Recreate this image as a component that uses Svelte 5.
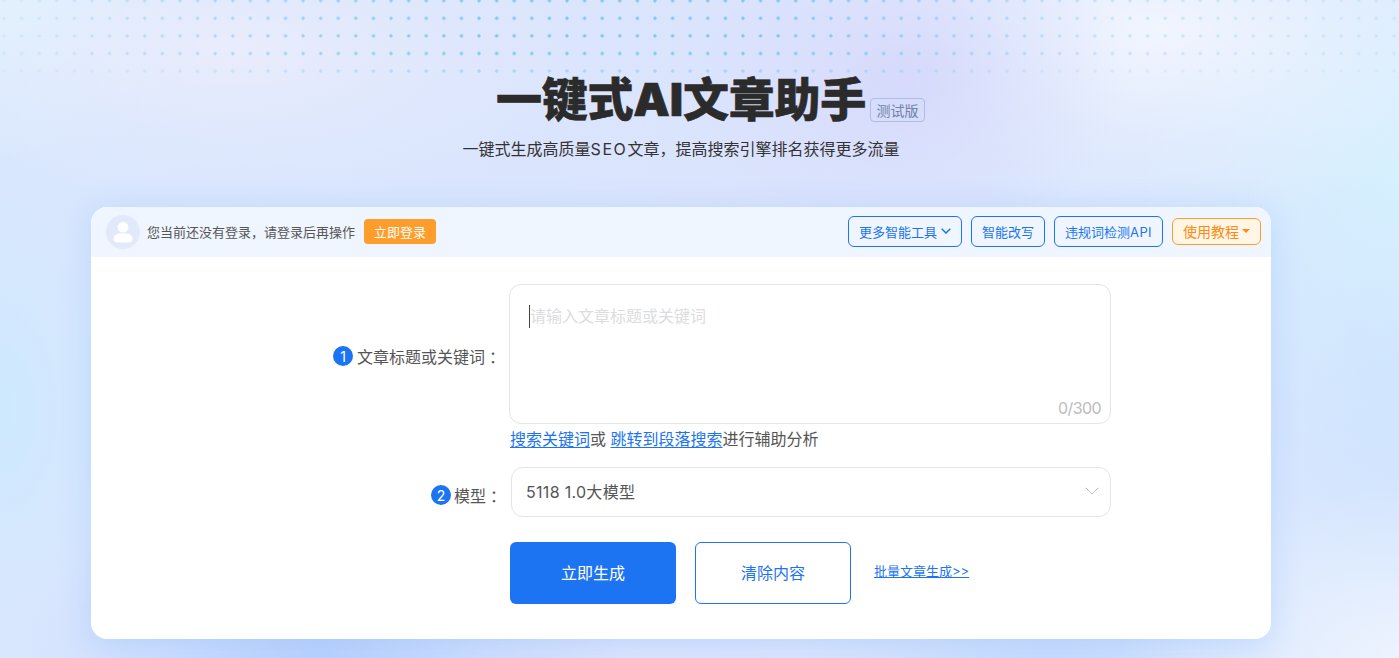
<script lang="ts">
  let title = $state('');
  let model = $state('5118 1.0大模型');
  const maxLength = 300;
</script>

<div class="page">
  <div class="dots"></div>

  <div class="main">
    <header class="hero">
      <h1>一键式AI文章助手<span class="beta">测试版</span></h1>
      <p>一键式生成高质量<span class="latin">SEO</span>文章，提高搜索引擎排名获得更多流量</p>
    </header>

    <section class="card">
      <div class="topbar">
        <div class="avatar">
          <svg width="20" height="22" viewBox="0 0 20 22" fill="#fff">
            <circle cx="10" cy="6.2" r="5.4" />
            <path d="M0.5 18c0-3.6 3-5.6 6-5.6h7c3 0 6 2 6 5.6 0 2.4-1.6 3.4-4 3.4h-11c-2.400 0-4-1-4-3.400z" />
          </svg>
        </div>
        <span class="login-tip">您当前还没有登录，请登录后再操作</span>
        <button class="login-btn">立即登录</button>

        <div class="tools">
          <button class="tool">
            更多智能工具
            <svg width="10" height="6" viewBox="0 0 10 6" fill="none" stroke="#1c74f2" stroke-width="1.500">
              <path d="M0.700 0.700 5 5 9.300 0.700" />
            </svg>
          </button>
          <button class="tool">智能改写</button>
          <button class="tool"><span>违规词检测<span class="api">API</span></span></button>
          <button class="tool tutorial">使用教程<i class="caret"></i></button>
        </div>
      </div>

      <div class="form">
        <div class="row row-title">
          <label class="label" for="title"><b class="num">1</b>文章标题或关键词<em>：</em></label>
          <div class="field">
            <div class="textarea-wrap">
              <textarea id="title" bind:value={title} placeholder="请输入文章标题或关键词"></textarea>
              <span class="cursor"></span>
              <span class="count">{title.length}/{maxLength}</span>
            </div>
            <div class="hint">
              <a href="#top">搜索关键词</a>或 <a href="#top">跳转到段落搜索</a>进行辅助分析
            </div>
          </div>
        </div>

        <div class="row row-model">
          <div class="label"><b class="num">2</b>模型<em>：</em></div>
          <div class="select">
            <span>{model}</span>
            <svg width="14" height="8" viewBox="0 0 14 8" fill="none" stroke="#b9bcc2" stroke-width="1">
              <path d="M0.800 0.800 7 7 13.200 0.800" />
            </svg>
          </div>
        </div>

        <div class="actions">
          <button class="primary">立即生成</button>
          <button class="secondary">清除内容</button>
          <a class="batch" href="#top">批量文章生成&gt;&gt;</a>
        </div>
      </div>
    </section>
  </div>
</div>

<style>
  :global(body) {
    margin: 0;
  }

  .page {
    position: relative;
    height: 658px;
    overflow: hidden;
    font-family: Inter, "Noto Sans CJK SC", sans-serif;
    color: #333;
    background:
      radial-gradient(ellipse 220px 170px at 905px 80px, #d6d9fb 0%, rgba(214, 217, 251, 0.350) 55%, rgba(214, 217, 251, 0) 100%),
      radial-gradient(ellipse 380px 190px at 1160px 30px, #f1f5fe 0%, rgba(241, 245, 254, 0.350) 55%, rgba(241, 245, 254, 0) 100%),
      radial-gradient(ellipse 260px 300px at 1399px 170px, #d5f0fe 0%, rgba(213, 240, 254, 0.350) 55%, rgba(213, 240, 254, 0) 100%),
      radial-gradient(ellipse 380px 160px at 230px 50px, #e9ecfc 0%, rgba(233, 236, 252, 0.350) 55%, rgba(233, 236, 252, 0) 100%),
      radial-gradient(ellipse 240px 160px at 0 0, #e0f3fe 0%, rgba(224, 243, 254, 0.350) 55%, rgba(224, 243, 254, 0) 100%),
      radial-gradient(ellipse 130px 230px at 0 410px, #cde9fe 0%, rgba(205, 233, 254, 0.350) 55%, rgba(205, 233, 254, 0) 100%),
      radial-gradient(ellipse 280px 170px at 1399px 658px, #edf3fe 0%, rgba(237, 243, 254, 0.350) 55%, rgba(237, 243, 254, 0) 100%),
      radial-gradient(ellipse 300px 170px at 320px 658px, #b9d0fd 0%, rgba(185, 208, 253, 0.350) 55%, rgba(185, 208, 253, 0) 100%),
      radial-gradient(ellipse 250px 90px at 1050px 658px, #c8dbfe 0%, rgba(200, 219, 254, 0) 100%),
      radial-gradient(ellipse 170px 220px at 1399px 370px, #cee2fe 0%, rgba(206, 226, 254, 0) 100%),
      linear-gradient(100deg, #d8e7fe 0%, #dbe4fd 50%, #d9e8fe 100%);
  }

  .dots {
    position: absolute;
    top: 0;
    left: 0;
    width: 100%;
    height: 78px;
    background-image: radial-gradient(circle, #7cc4fb 1.300px, transparent 1.900px);
    background-size: 17.600px 17.600px;
    background-position: -4.800px -8.100px;
    -webkit-mask-image:
      linear-gradient(90deg, rgba(0, 0, 0, 0.150) 0%, #000 35%, #000 55%, rgba(0, 0, 0, 0.400) 75%, rgba(0, 0, 0, 0.200) 100%),
      linear-gradient(180deg, #000 70%, rgba(0, 0, 0, 0.350) 100%);
    -webkit-mask-composite: source-in;
    mask-composite: intersect;
  }

  .main {
    position: relative;
    width: 1180px;
    margin-left: 91px;
  }

  .hero {
    padding-top: 68px;
    height: 139px;
    text-align: center;
  }

  h1 {
    position: relative;
    display: inline-block;
    margin: 0 0 7px;
    font-size: 46px;
    line-height: 62px;
    font-weight: 900;
    letter-spacing: -0.200px;
    color: #2b2b2b;
    -webkit-text-stroke: 0.600px #2b2b2b;
  }

  .beta {
    position: absolute;
    left: 100%;
    top: 30px;
    box-sizing: border-box;
    margin-left: 4px;
    padding: 0 5.500px;
    height: 24px;
    line-height: 23px;
    border: 1px solid #a9bfe8;
    border-radius: 4px;
    font-size: 14px;
    font-weight: 400;
    letter-spacing: 0;
    white-space: nowrap;
    color: #6f83a8;
    -webkit-text-stroke: 0;
  }

  .hero p {
    margin: 0;
    font-size: 16px;
    line-height: 24px;
    color: #333;
  }

  .latin {
    letter-spacing: 1.600px;
  }

  .card {
    height: 432px;
    background: #fff;
    border-radius: 16px;
    overflow: hidden;
    box-shadow: 0 4px 30px rgba(120, 175, 250, 0.300);
  }

  .topbar {
    display: flex;
    align-items: center;
    box-sizing: border-box;
    height: 50px;
    padding: 0 10px 1px 15px;
    background: #eff6ff;
  }

  .avatar {
    display: flex;
    align-items: center;
    justify-content: center;
    width: 34px;
    height: 34px;
    border-radius: 50%;
    background: #e2e9fb;
  }

  .login-tip {
    margin-left: 7px;
    font-size: 13px;
    color: #555;
  }

  .login-btn {
    margin-left: 9px;
    width: 72px;
    height: 25px;
    padding: 0 0 1px;
    border: none;
    border-radius: 4px;
    background: #ff9d2b;
    color: #fff;
    font: inherit;
    font-size: 13px;
    cursor: pointer;
  }

  .tools {
    display: flex;
    align-items: center;
    margin-left: auto;
    gap: 9px;
  }

  .tool {
    display: flex;
    align-items: center;
    justify-content: center;
    gap: 4px;
    height: 31px;
    padding: 0 10px 1px;
    box-sizing: border-box;
    border: 1px solid #1c74f2;
    border-radius: 6px;
    background: transparent;
    color: #1c74f2;
    font: inherit;
    font-size: 13px;
    cursor: pointer;
  }

  .api {
    letter-spacing: 0.400px;
  }

  .tutorial {
    gap: 3px;
    height: 27px;
    border-color: #ff9d2b;
    background: #fff6e6;
    color: #ff8a14;
    font-size: 14px;
  }

  .caret {
    width: 0;
    height: 0;
    border-left: 4px solid transparent;
    border-right: 4px solid transparent;
    border-top: 4px solid #ff8a14;
  }

  .form {
    padding-top: 27px;
  }

  .row {
    display: flex;
    font-size: 16px;
    color: #555;
  }

  .label {
    display: flex;
    align-items: center;
    justify-content: flex-end;
    box-sizing: border-box;
    font-size: 16px;
    color: #555;
  }

  .label em {
    box-sizing: border-box;
    width: 14px;
    padding-left: 4px;
    font-style: normal;
    white-space: nowrap;
  }

  .num {
    display: flex;
    align-items: center;
    justify-content: center;
    width: 20px;
    height: 20px;
    margin-right: 4px;
    border-radius: 50%;
    background: #1c74f2;
    color: #fff;
    font-size: 14px;
    font-weight: 400;
  }

  .row-title .label {
    width: 408px;
    height: 140px;
    margin-top: 2px;
    margin-right: 10px;
  }

  .field {
    width: 602px;
  }

  .textarea-wrap {
    position: relative;
    height: 140px;
  }

  textarea {
    display: block;
    width: 100%;
    height: 100%;
    box-sizing: border-box;
    padding: 19px 20px;
    border: 1px solid #e3e4e6;
    border-radius: 12px;
    outline: none;
    resize: none;
    font: inherit;
    font-size: 16px;
    line-height: 24px;
    color: #333;
  }

  textarea::placeholder {
    color: #dcdde0;
    opacity: 1;
  }

  .cursor {
    position: absolute;
    left: 20px;
    top: 21px;
    width: 1px;
    height: 23px;
    background: #444;
  }

  .count {
    position: absolute;
    right: 10px;
    bottom: 6px;
    font-size: 16px;
    letter-spacing: -0.600px;
    color: #bcbcbc;
  }

  .hint {
    height: 32px;
    padding-left: 1px;
    line-height: 30px;
    font-size: 16px;
    color: #555;
  }

  .hint a {
    color: #1c74f2;
    text-decoration: underline;
    text-underline-offset: 2px;
  }

  .row-model {
    margin-top: 11px;
  }

  .row-model .label {
    width: 409px;
    height: 50px;
    margin-top: 3px;
  }

  .row-model .num {
    margin-right: 3px;
  }

  .select {
    display: flex;
    align-items: center;
    justify-content: space-between;
    box-sizing: border-box;
    width: 600px;
    height: 50px;
    margin-left: 11px;
    padding: 0 11px 2px 14px;
    border: 1px solid #e3e4e6;
    border-radius: 12px;
    font-size: 16px;
    color: #555;
  }

  .select span {
    letter-spacing: 0.300px;
  }

  .actions {
    display: flex;
    align-items: center;
    margin-top: 22px;
    padding-left: 419px;
  }

  .actions button {
    height: 62px;
    padding-bottom: 3px;
    box-sizing: border-box;
    border-radius: 6px;
    font: inherit;
    font-size: 16px;
    cursor: pointer;
  }

  .primary {
    width: 166px;
    border: none;
    background: #1c74f2;
    color: #fff;
  }

  .secondary {
    width: 156px;
    margin-left: 19px;
    border: 1px solid #1c74f2;
    background: #fff;
    color: #1c74f2;
  }

  .batch {
    margin-left: 23px;
    margin-bottom: 5px;
    font-size: 13px;
    color: #1c74f2;
    text-decoration: underline;
    text-underline-offset: 1px;
  }
</style>
